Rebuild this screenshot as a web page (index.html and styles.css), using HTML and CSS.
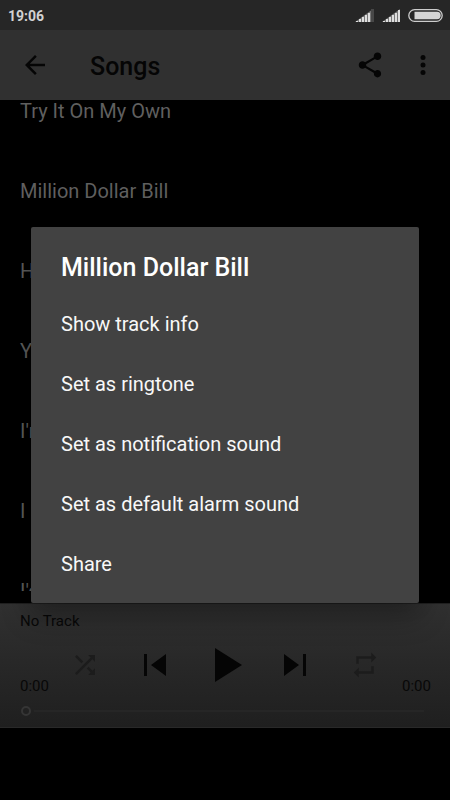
FILE: index.html
```html
<!DOCTYPE html>
<html lang="en">
<head>
<meta charset="utf-8">
<title>Songs</title>
<link rel="stylesheet" href="styles.css">
</head>
<body>
<div class="screen">
  <header class="status">
    <span class="clock">19:06</span>
    <svg class="signal" width="20" height="14" viewBox="0 0 20 14"><path d="M0 13 18 0V13Z" fill="#777"/><path d="M1 13v-1h2v1zM4 13v-3h2v3zM7 13V8h2v5zM10 13V6h2v7zM13 13V4h2v9z" fill="#ddd"/><path d="M16 0h3v13h-3z" fill="#484848"/></svg>
    <svg class="signal second" width="20" height="14" viewBox="0 0 20 14"><path d="M0 13 18 0V13Z" fill="#777"/><path d="M1 13v-1h2v1zM4 13v-3h2v3zM7 13V8h2v5zM10 13V6h2v7zM13 13V4h2v9zM16 13V1h2v12z" fill="#ddd"/></svg>
    <svg class="battery" width="35" height="13" viewBox="0 0 35 13"><rect x=".8" y=".7" width="33.4" height="11.6" rx="5.8" fill="none" stroke="#ccc" stroke-width="1.3"/><path d="M6.500 2.800H29a3.700 3.700 0 0 1 0 7.400H6.500z" fill="#d4d4d4"/></svg>
  </header>
  <nav class="toolbar">
    <svg class="back" width="30" height="30" viewBox="0 0 24 24"><path d="M20 11H7.830l5.590-5.590L12 4l-8 8 8 8 1.410-1.410L7.830 13H20z"/></svg>
    <h1>Songs</h1>
    <svg class="share" width="30" height="30" viewBox="0 0 24 24"><path d="M18 16.080c-.76 0-1.440.3-1.960.77L8.910 12.700c.05-.23.09-.46.09-.7s-.04-.47-.09-.7l7.050-4.110c.54.5 1.250.81 2.040.81 1.660 0 3-1.340 3-3s-1.340-3-3-3-3 1.340-3 3c0 .24.04.47.09.7L8.040 9.810C7.500 9.310 6.790 9 6 9c-1.660 0-3 1.340-3 3s1.340 3 3 3c.79 0 1.500-.31 2.040-.81l7.120 4.160c-.05.21-.08.43-.08.65 0 1.610 1.310 2.920 2.920 2.920s2.920-1.310 2.920-2.920-1.310-2.920-2.920-2.920z"/></svg>
    <svg class="more" width="30" height="30" viewBox="0 0 24 24"><circle cx="12" cy="6" r="2"/><circle cx="12" cy="12" r="2"/><circle cx="12" cy="18" r="2"/></svg>
  </nav>
  <main class="list">
    <ul>
      <li>Try It On My Own</li>
      <li>Million Dollar Bill</li>
      <li>H</li>
      <li>Y</li>
      <li>I'm</li>
      <li>I</li>
      <li>I'd</li>
    </ul>
  </main>
  <footer class="player">
    <div class="track">No Track</div>
    <div class="controls">
      <span class="time">0:00</span>
      <svg class="shuffle" width="30" height="30" viewBox="0 0 24 24"><path d="M10.590 9.170 5.410 4 4 5.410l5.170 5.170zM14.500 4l2.040 2.040L4 18.590 5.410 20 17.960 7.460 20 9.500V4zm.33 9.410-1.410 1.410 3.130 3.130L14.500 20H20v-5.500l-2.040 2.040z"/></svg>
      <svg class="prev" width="24" height="24" viewBox="0 0 24 24"><path d="M1 1h3v22H1zM23 1v22L8 12z"/></svg>
      <svg class="play" width="28" height="36" viewBox="0 0 28 36"><path d="M1 1v34l27-17z"/></svg>
      <svg class="next" width="24" height="24" viewBox="0 0 24 24"><path d="M20 1h3v22h-3zM1 1v22l15-11z"/></svg>
      <svg class="repeat" width="30" height="30" viewBox="0 0 24 24"><path d="M7 7h10v3l4-4-4-4v3H5v6h2zM17 17H7v-3l-4 4 4 4v-3h12v-6h-2z"/></svg>
      <span class="time end">0:00</span>
    </div>
    <div class="seek"><i class="thumb"></i><i class="rail"></i></div>
  </footer>
  <section class="dialog">
    <h2>Million Dollar Bill</h2>
    <ul>
      <li>Show track info</li>
      <li>Set as ringtone</li>
      <li>Set as notification sound</li>
      <li>Set as default alarm sound</li>
      <li>Share</li>
    </ul>
  </section>
</div>
</body>
</html>
```
FILE: styles.css
```css
* { box-sizing: border-box; }
body { margin: 0; background: #000; font-family: Roboto, "Liberation Sans", sans-serif; }
h1, h2, ul { margin: 0; padding: 0; }
h1, h2 { font-weight: 500; }
ul { list-style: none; }
svg { display: block; flex: none; }
.screen { position: relative; width: 450px; height: 800px; overflow: hidden; background: #000; display: flex; flex-direction: column; }
.status { height: 30px; flex: none; background: #262626; display: flex; align-items: center; padding: 0 7px 0 8px; }
.clock { flex: 1; color: #d2d2d2; font-size: 14px; font-weight: 700; line-height: 30px; padding-top: 2px; }
.signal { margin-top: 1px; margin-right: 7px; }
.signal.second { margin-right: 6px; }
.toolbar { height: 70px; flex: none; background: #303030; display: flex; align-items: center; padding: 0 12px 0 20px; }
.toolbar h1 { flex: 1; margin-left: 40px; padding-top: 3px; font-size: 25px; line-height: 30px; color: #050505; }
.share { margin-right: 23px; }
.toolbar svg { fill: #050505; }
.list { height: 491px; flex: none; overflow: hidden; }
.list ul { margin-top: -29px; }
.list li { height: 80px; padding-left: 20px; line-height: 80px; font-size: 20px; color: #5f5f5f; white-space: nowrap; }
.player { height: 125px; flex: none; margin-top: 12px; padding-top: 7px; background: linear-gradient(#303030, #1f1f1f); border-top: 1px solid #202020; border-bottom: 1px solid #292929; }
.track { padding-left: 20px; height: 20px; font-size: 15px; line-height: 20px; color: #080808; }
.controls { height: 68px; display: flex; align-items: center; padding: 0 20px; color: #080808; }
.controls svg { fill: #050505; }
.time { width: 28px; font-size: 15px; line-height: 20px; padding-top: 41px; white-space: nowrap; }
.controls .shuffle { margin-left: 22px; fill: #1c1c1c; }
.prev { margin-left: 43px; }
.play { margin-left: 47px; }
.next { margin-left: 41px; }
.controls .repeat { margin-left: 43px; fill: #1c1c1c; }
.end { margin-left: 22px; }
.seek { display: flex; align-items: center; padding: 0 26px 0 21px; margin-top: 7px; }
.thumb { width: 10px; height: 10px; border: 2px solid #353535; border-radius: 50%; }
.rail { flex: 1; height: 2px; margin-left: 3px; background: #262626; }
.dialog { position: absolute; left: 31px; top: 227px; width: 388px; height: 376px; padding: 21px 30px 0; background: #424242; border-radius: 2px; box-shadow: 0 12px 30px rgba(0,0,0,.3), 0 2px 20px rgba(0,0,0,.1); color: #fff; }
.dialog h2 { height: 46px; font-size: 25px; line-height: 40px; }
.dialog li { height: 60px; line-height: 60px; font-size: 20px; color: #f8f8f8; white-space: nowrap; }
```
